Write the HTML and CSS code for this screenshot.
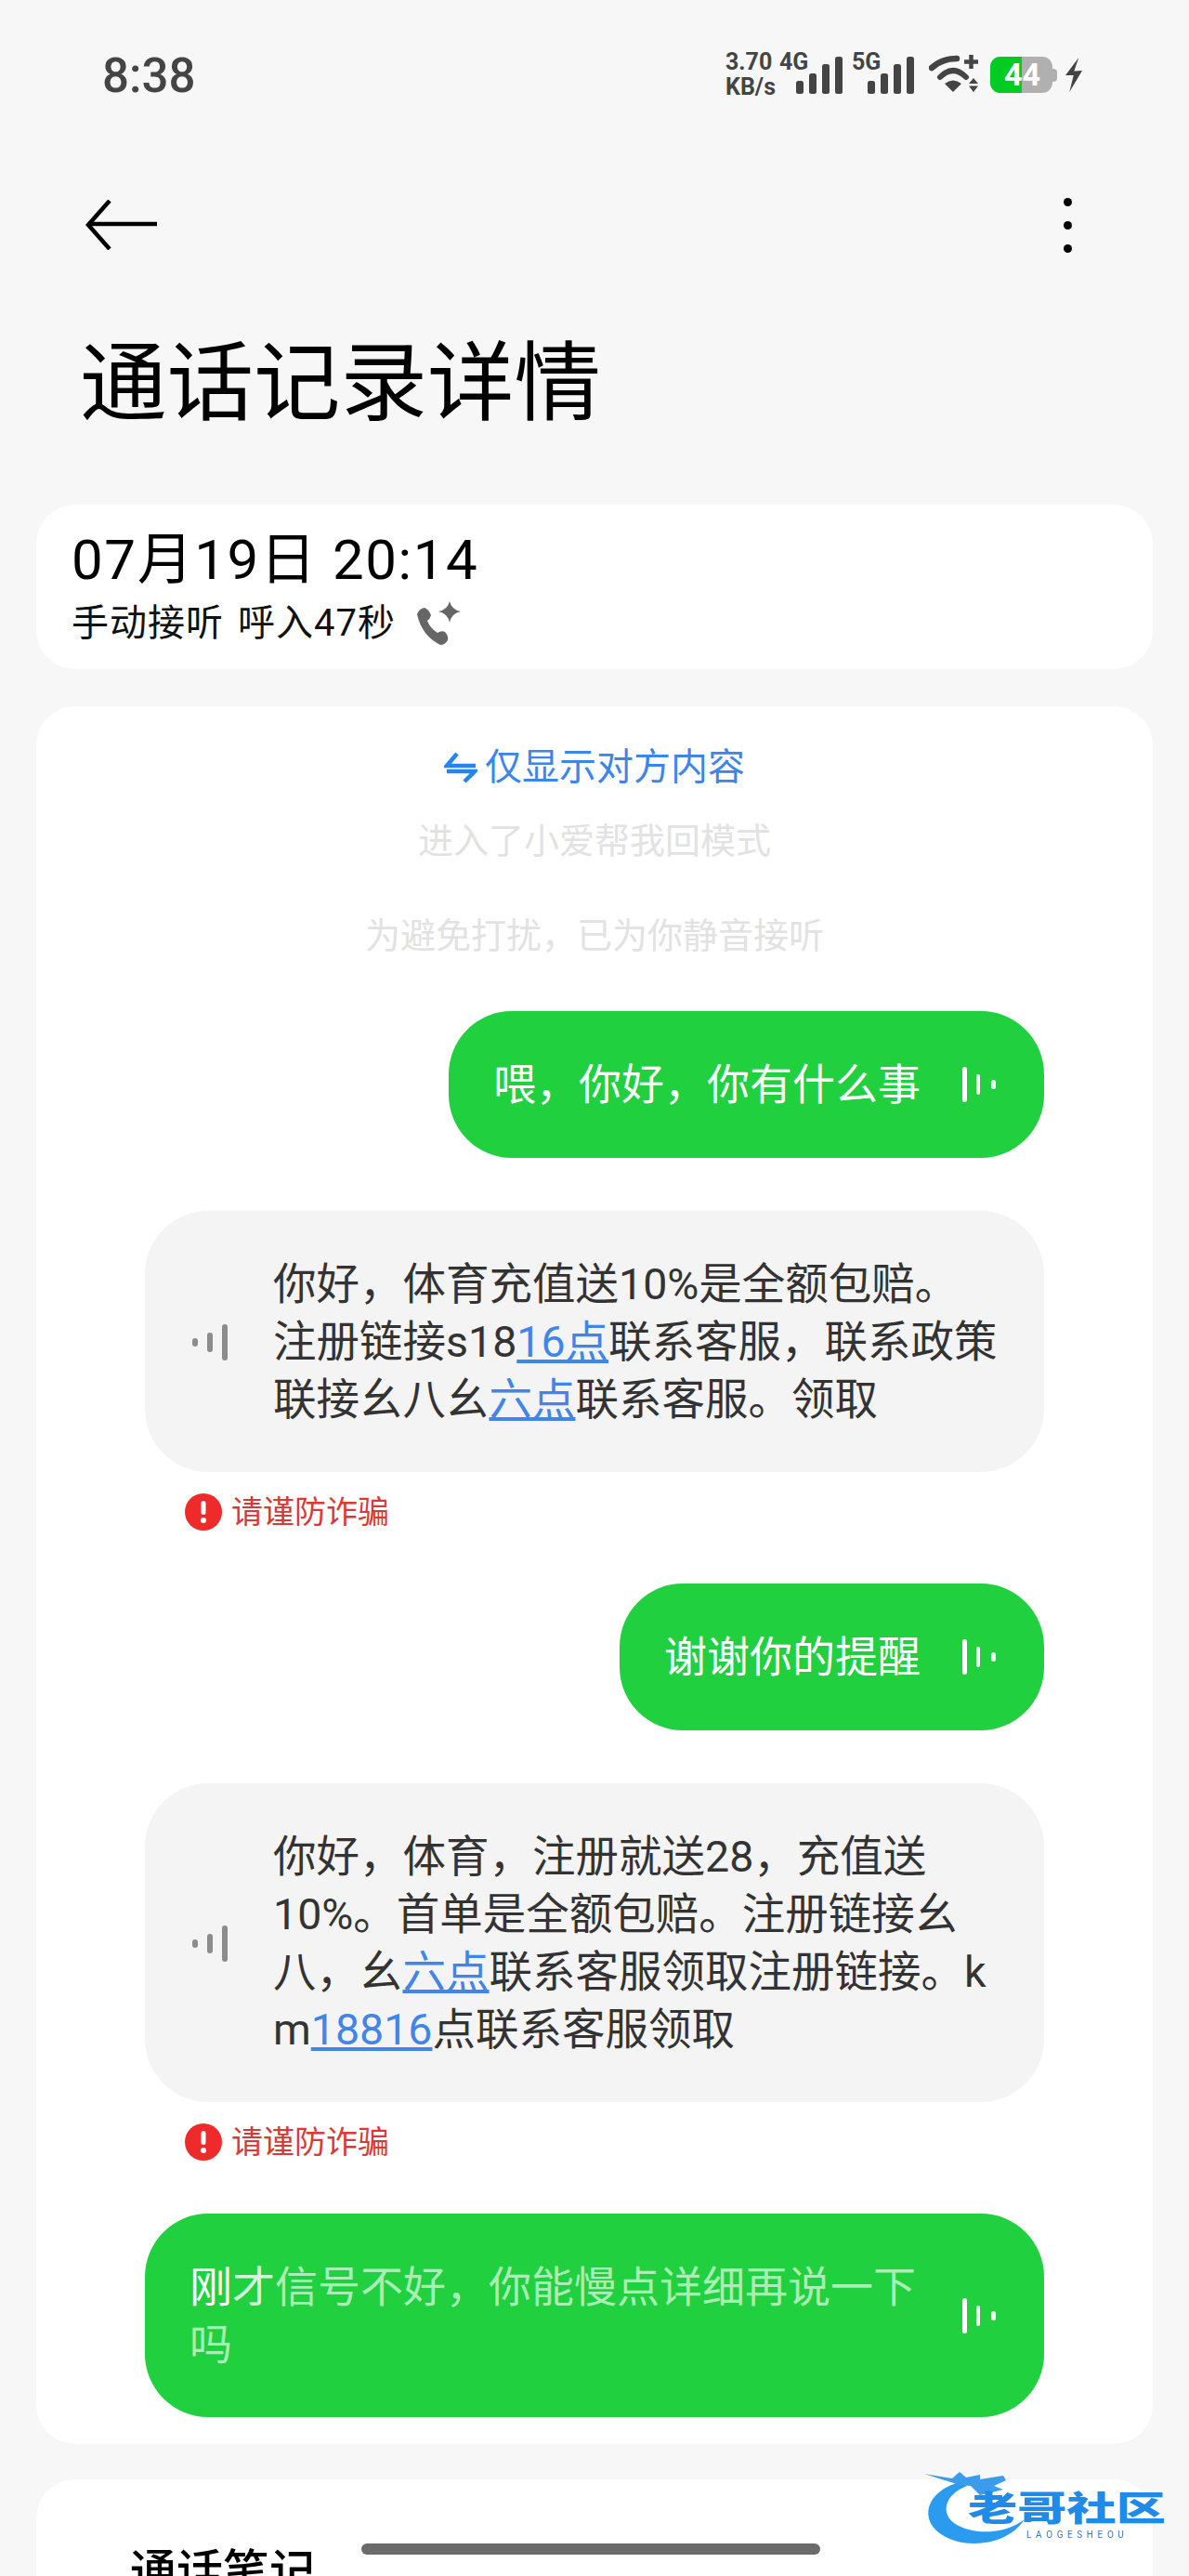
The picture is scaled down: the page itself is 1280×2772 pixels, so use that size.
FILE: index.html
```html
<!DOCTYPE html>
<html lang="zh-CN">
<head>
<meta charset="UTF-8">
<meta name="viewport" content="width=device-width, initial-scale=1.0">
<title>通话记录详情</title>
<link rel="stylesheet" href="styles.css">
</head>
<body>
<div class="page">

  <div class="status">
    <div class="time">8:38</div>
    <div class="status-icons">
      <div class="speed"><span>3.70</span><span>KB/s</span></div>
      <div class="net net-4g">4G</div>
      <svg class="signal" viewBox="0 0 50 40"><rect x="0" y="26" width="8" height="14" rx="2.5"/><rect x="14" y="18" width="8" height="22" rx="2.5"/><rect x="28" y="8" width="8" height="32" rx="2.5"/><rect x="42" y="0" width="8" height="40" rx="2.5"/></svg>
      <div class="net net-5g">5G</div>
      <svg class="signal" viewBox="0 0 50 40"><rect x="0" y="26" width="8" height="14" rx="2.5"/><rect x="14" y="18" width="8" height="22" rx="2.5"/><rect x="28" y="8" width="8" height="32" rx="2.5"/><rect x="42" y="0" width="8" height="40" rx="2.5"/></svg>
      <svg class="wifi" viewBox="0 0 54 40"><path d="M3 14Q14 4 30 4" fill="none" stroke="#444" stroke-width="6.5" stroke-linecap="round"/><path d="M12 24Q26 10 40 24" fill="none" stroke="#444" stroke-width="6" stroke-linecap="round"/><path d="M17 31Q26 24 35 31L26 40Z" fill="#444"/><path d="M45.500 0V15M38 7.500H53" fill="none" stroke="#444" stroke-width="4.500"/><path d="M43 31L48 25L53 31ZM43 33.500L48 40L53 33.500Z" fill="#444"/></svg>
      <div class="battery">
        <div class="battery-body">
          <div class="battery-fill"></div>
          <span class="battery-num">44</span>
        </div>
        <div class="battery-tip"></div>
      </div>
      <svg class="bolt" viewBox="0 0 18 37"><path d="M14.300 0L0 19L8.700 19L4.300 37L18 14L9.300 14.600Z" fill="#444"/></svg>
    </div>
  </div>

  <div class="topbar">
    <svg class="back" viewBox="0 0 78 54"><path d="M77 26H4M26 1L3 27L26 53" fill="none" stroke="#000" stroke-width="4.5"/></svg>
    <div class="more"><span></span><span></span><span></span></div>
  </div>

  <h1 class="title">通话记录详情</h1>

  <div class="card summary">
    <div class="date">07月19日 20:14</div>
    <div class="sub">
      <span>手动接听 呼入47秒</span>
      <svg class="ai-call" viewBox="0 0 52 48"><path d="M36 0Q38 9 48 11Q38 13 36 23Q34 13 24 11Q34 9 36 0Z" fill="#666"/><path d="M1 14Q3 8 9 7Q13 8 16 15Q15 19 12 21Q15 29 23 34Q27 31 31 33Q35 37 34 42Q31 47 26 47Q6 37 1 14Z" fill="#666"/></svg>
    </div>
  </div>

  <div class="card transcript">
    <div class="toggle">
      <svg class="swap" viewBox="0 0 36 34"><path d="M14 2L3 15H34M3 21H33L22 32" fill="none" stroke="#2286ee" stroke-width="4.5"/></svg>
      <span>仅显示对方内容</span>
    </div>
    <p class="sys sys-first">进入了小爱帮我回模式</p>
    <p class="sys sys-second">为避免打扰，已为你静音接听</p>

    <div class="messages">
      <div class="bubble me">
        <div class="text">喂，你好，你有什么事</div>
        <svg class="wave" viewBox="0 0 40 40"><rect x="1" y="1" width="5" height="38" rx="2.5"/><rect x="16" y="9" width="4" height="22" rx="2"/><rect x="32" y="15" width="5" height="10" rx="2.5"/></svg>
      </div>

      <div class="group">
        <div class="bubble them">
          <svg class="wave" viewBox="0 0 40 40"><rect x="1" y="16" width="6" height="9" rx="3"/><rect x="17" y="10" width="6" height="21" rx="3"/><rect x="33" y="1" width="6" height="39" rx="3"/></svg>
          <div class="text">你好，体育充值送10%是全额包赔。<br>注册链接s18<a>16点</a>联系客服，联系政策<br>联接幺八幺<a>六点</a>联系客服。领取</div>
        </div>
        <div class="warn">
          <svg class="warn-icon" viewBox="0 0 40 40"><circle cx="20" cy="20" r="20" fill="#ee2a2a"/><rect x="17.5" y="8" width="5" height="15" rx="2.5" fill="#fff"/><circle cx="20" cy="29" r="3" fill="#fff"/></svg>
          <span>请谨防诈骗</span>
        </div>
      </div>

      <div class="bubble me">
        <div class="text">谢谢你的提醒</div>
        <svg class="wave" viewBox="0 0 40 40"><rect x="1" y="1" width="5" height="38" rx="2.5"/><rect x="16" y="9" width="4" height="22" rx="2"/><rect x="32" y="15" width="5" height="10" rx="2.5"/></svg>
      </div>

      <div class="group">
        <div class="bubble them">
          <svg class="wave" viewBox="0 0 40 40"><rect x="1" y="16" width="6" height="9" rx="3"/><rect x="17" y="10" width="6" height="21" rx="3"/><rect x="33" y="1" width="6" height="39" rx="3"/></svg>
          <div class="text">你好，体育，注册就送28，充值送<br>10%。首单是全额包赔。注册链接幺<br>八，幺<a>六点</a>联系客服领取注册链接。k<br>m<a>18816</a>点联系客服领取</div>
        </div>
        <div class="warn">
          <svg class="warn-icon" viewBox="0 0 40 40"><circle cx="20" cy="20" r="20" fill="#ee2a2a"/><rect x="17.5" y="8" width="5" height="15" rx="2.5" fill="#fff"/><circle cx="20" cy="29" r="3" fill="#fff"/></svg>
          <span>请谨防诈骗</span>
        </div>
      </div>

      <div class="bubble me wide">
        <div class="text"><span class="said">刚</span><span class="saying">才</span>信号不好，你能慢点详细再说一下<br>吗</div>
        <svg class="wave" viewBox="0 0 40 40"><rect x="1" y="1" width="5" height="38" rx="2.5"/><rect x="16" y="9" width="4" height="22" rx="2"/><rect x="32" y="15" width="5" height="10" rx="2.5"/></svg>
      </div>
    </div>
  </div>

  <div class="card notes">
    <h2>通话笔记</h2>
  </div>

  <div class="home-bar"></div>

  <div class="watermark">
    <svg class="wm-dragon" viewBox="0 0 265 82"><path d="M38 14C2 24-6 54 18 70C42 86 88 84 108 54C88 70 52 72 32 58C16 46 24 26 46 18Z" fill="#2a9bef"/><path d="M0 5L30 10L38 3L45 9L60 6L60 11L85 7L88 12L75 18L85 22L60 28L50 18L38 17Z" fill="#3a9cea"/></svg>
    <div class="wm-name">老哥社区</div>
    <div class="wm-latin">LAOGESHEOU</div>
  </div>

</div>
</body>
</html>
```

FILE: styles.css
```css
body {
  margin: 0;
  background-color: #f7f7f7;
  font-family: Roboto, "Noto Sans CJK SC", sans-serif;
}
.page {
  position: relative;
  width: 1280px;
  height: 2772px;
  overflow: hidden;
}

/* status bar */
.status {
  display: flex;
  justify-content: space-between;
  height: 46px;
  padding: 56px 115px 0 110px;
}
.time {
  margin-top: 1px;
  font-size: 51px;
  font-weight: 500;
  line-height: 50px;
  color: #444;
}
.status-icons {
  display: flex;
  align-items: flex-start;
  color: #444;
  font-weight: 700;
}
.speed {
  display: flex;
  flex-direction: column;
  width: 58px;
  margin-top: -3px;
  font-size: 25px;
  line-height: 27px;
}
.net {
  font-size: 25px;
  line-height: 27px;
  margin-top: -3px;
}
.net-4g {
  width: 18px;
}
.net-5g {
  width: 17px;
  margin-left: 10px;
}
.signal {
  width: 50px;
  height: 40px;
  margin-top: 5px;
  fill: #444;
}
.wifi {
  width: 54px;
  height: 40px;
  margin: 3px 0 0 16px;
}
.battery {
  display: flex;
  align-items: center;
  height: 39px;
  margin: 5px 0 0 12px;
}
.battery-body {
  position: relative;
  width: 67px;
  height: 39px;
  border-radius: 11px;
  background-color: #b0b0b0;
  overflow: hidden;
}
.battery-tip {
  width: 5px;
  height: 14px;
  border-radius: 0 4px 4px 0;
  background-color: #b0b0b0;
}
.battery-fill {
  width: 34px;
  height: 39px;
  background-color: #00cc22;
}
.battery-num {
  position: absolute;
  top: 0;
  left: 15px;
  font-size: 34px;
  line-height: 39px;
  color: #fff;
}
.bolt {
  width: 18px;
  height: 37px;
  margin: 6px 0 0 9px;
}

/* header */
.topbar {
  display: flex;
  justify-content: space-between;
  align-items: center;
  height: 54px;
  margin-top: 113px;
  padding: 0 126px 0 92px;
}
.back {
  width: 78px;
  height: 54px;
}
.more {
  display: flex;
  flex-direction: column;
  gap: 16px;
}
.more span {
  width: 9px;
  height: 9px;
  border-radius: 50%;
  background-color: #000;
}
.title {
  margin: 94px 0 0 86px;
  font-size: 93.5px;
  font-weight: 400;
  line-height: 100px;
  color: #000;
}

/* cards */
.card {
  margin: 0 39px;
  background-color: #fff;
  border-radius: 42px;
}
.summary {
  height: 147px;
  margin-top: 80px;
  padding: 30px 38px 0;
}
.date {
  font-size: 60px;
  line-height: 60px;
  letter-spacing: 1.6px;
  color: #000;
}
.sub {
  display: flex;
  align-items: center;
  gap: 22px;
  margin-top: 14px;
  font-size: 40px;
  line-height: 48px;
  letter-spacing: 1px;
  word-spacing: 4px;
  color: #111;
}
.ai-call {
  width: 52px;
  height: 48px;
}
.transcript {
  margin-top: 40px;
  padding: 42px 117px 29px;
}
.toggle {
  display: flex;
  justify-content: center;
  align-items: center;
  gap: 8px;
  font-size: 40px;
  line-height: 48px;
  color: #3b86e8;
}
.swap {
  width: 36px;
  height: 34px;
}
.sys {
  margin: 0;
  text-align: center;
  font-size: 38px;
  line-height: 48px;
  color: #e2e2e2;
}
.sys-first {
  margin-top: 31px;
}
.sys-second {
  margin-top: 54px;
}

/* messages */
.messages {
  display: flex;
  flex-direction: column;
  align-items: flex-end;
  gap: 57px;
  margin-top: 57px;
}
.group {
  width: 100%;
}
.bubble {
  display: flex;
  align-items: center;
  box-sizing: border-box;
  padding: 48px 49px 47px 48px;
  border-radius: 68px;
  font-size: 46px;
  line-height: 62px;
}
.bubble .text {
  white-space: nowrap;
}
.wave {
  flex: none;
  width: 40px;
  height: 40px;
}
.me {
  gap: 44px;
  padding-bottom: 48px;
  background-color: #20d03f;
  color: #fff;
}
.me .wave {
  fill: #fff;
}
.wide {
  justify-content: space-between;
  width: 100%;
  padding-bottom: 47px;
  color: #a8eeb6;
}
.said {
  color: #fff;
}
.saying {
  color: #d6f6dc;
}
.them {
  gap: 48px;
  padding-left: 50px;
  font-size: 46.5px;
  background-color: #f4f4f4;
  color: #333;
}
.them .wave {
  fill: #8c8c8c;
}
.them a {
  color: #4285e8;
  text-decoration: underline;
}
.warn {
  display: flex;
  align-items: center;
  gap: 10px;
  margin: 23px 0 0 43px;
  font-size: 34px;
  line-height: 40px;
  color: #d93a36;
}
.warn-icon {
  width: 40px;
  height: 40px;
}
.notes {
  height: 300px;
  margin-top: 38px;
  padding: 70px 101px 0;
}
.notes h2 {
  margin: 0;
  font-size: 50px;
  font-weight: 500;
  line-height: 60px;
  color: #000;
}

/* overlays */
.home-bar {
  position: absolute;
  left: 389px;
  top: 2737px;
  width: 494px;
  height: 12px;
  border-radius: 6px;
  background-color: #6b6b6b;
}
.watermark {
  position: absolute;
  left: 995px;
  top: 2657px;
  width: 265px;
  height: 82px;
  filter: blur(0.5px);
}
.wm-dragon {
  position: absolute;
  left: 0;
  top: 0;
  width: 265px;
  height: 82px;
}
.wm-name {
  position: absolute;
  left: 47px;
  top: 24px;
  font-size: 37px;
  font-weight: 900;
  line-height: 40px;
  white-space: nowrap;
  color: #1f8ae8;
  transform: scaleX(1.44);
  transform-origin: left center;
}
.wm-latin {
  position: absolute;
  left: 110px;
  top: 65px;
  font-size: 10px;
  line-height: 12px;
  letter-spacing: 4.6px;
  color: #3a78c8;
}
```
